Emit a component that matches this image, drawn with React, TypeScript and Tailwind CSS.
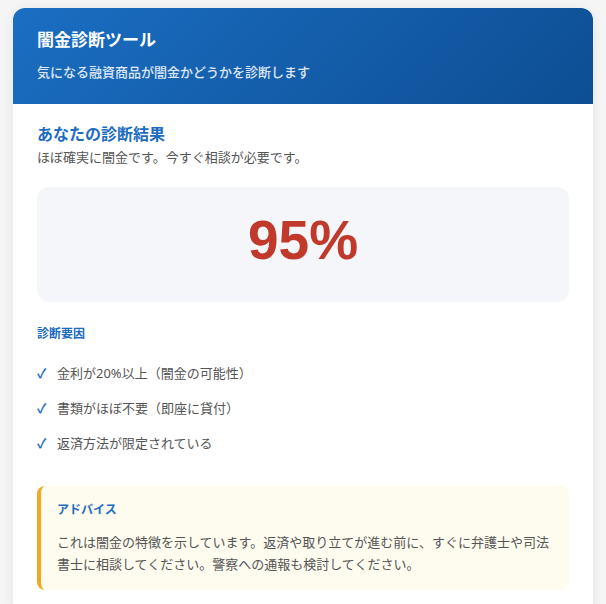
export default function App() {
  const factors = [
    "金利が20%以上（闇金の可能性）",
    "書類がほぼ不要（即座に貸付）",
    "返済方法が限定されている",
  ];

  return (
    <div
      className="h-[604px] overflow-hidden bg-[#f5f5f5] pt-2"
      style={{ fontFamily: '"Noto Sans", "Noto Sans CJK JP", sans-serif' }}
    >
      <div className="mx-auto w-[580px] overflow-hidden rounded-xl bg-white shadow-[0_2px_12px_rgba(0,0,0,0.08)]">
        {/* Header */}
        <div className="h-24 bg-linear-[135deg] from-[#1b6ec3] to-[#0d4e93] px-6 pt-5">
          <h1 className="text-[17px] font-bold leading-6 text-white">闇金診断ツール</h1>
          <p className="mt-[10px] text-[13px] font-medium leading-5 text-white/85">
            気になる融資商品が闇金かどうかを診断します
          </p>
        </div>

        {/* Body */}
        <div className="px-6 pt-[18px] pb-6">
          <h2 className="text-base font-bold leading-6 text-[#1c6cc0]">あなたの診断結果</h2>
          <p className="mt-px text-[13px] leading-5 text-[#555]">
            ほぼ確実に闇金です。今すぐ相談が必要です。
          </p>

          <div className="mt-5 h-[115px] rounded-xl bg-[#f5f6fa] pt-[26px] text-center">
            <span
              className="text-[55px] font-bold leading-none text-[#c0392b]"
              style={{ fontFamily: '"Liberation Sans", Arial, sans-serif' }}
            >
              95%
            </span>
          </div>

          <h3 className="mt-[22px] text-xs font-bold leading-5 text-[#1c6cc0]">診断要因</h3>
          <ul className="mt-[19px] flex flex-col gap-[15px]">
            {factors.map((f) => (
              <li key={f} className="flex items-center gap-2 text-[13px] leading-5 text-[#555]">
                <span className="w-3 font-bold text-[#1c6cc0]">✓</span>
                <span>{f}</span>
              </li>
            ))}
          </ul>

          <div className="mt-[33px] rounded-lg border-l-4 border-[#f5a623] bg-[#fefbef] pt-[14px] pr-4 pb-[15px] pl-4">
            <h4 className="text-xs font-bold leading-5 text-[#1c6cc0]">アドバイス</h4>
            <p className="mt-[11px] text-[13px] leading-[22px] text-[#555]">
              これは闇金の特徴を示しています。返済や取り立てが進む前に、すぐに弁護士や司法書士に相談してください。警察への通報も検討してください。
            </p>
          </div>
        </div>
      </div>
    </div>
  );
}
